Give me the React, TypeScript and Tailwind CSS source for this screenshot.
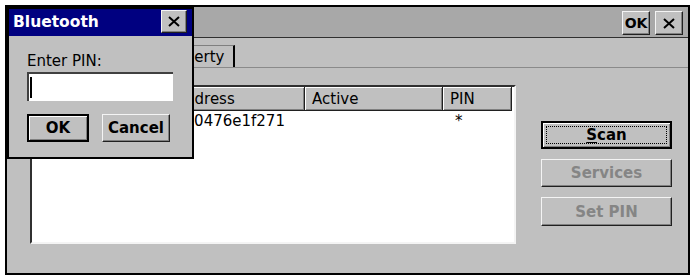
import React from "react";

function XIcon() {
  return (
    <svg width="12" height="11" viewBox="0 0 12 11">
      <path d="M1 1 L11 10 M11 1 L1 10" stroke="#000" strokeWidth="2" fill="none" />
    </svg>
  );
}

const raised =
  "bg-[#c0c0c0] border border-t-[#f4f4f4] border-l-[#f4f4f4] border-b-[#202020] border-r-[#202020] shadow-[inset_-1px_-1px_0_#808080]";

const headerCell =
  "h-[24px] bg-[#c0c0c0] border-r border-b border-[#202020] shadow-[inset_1px_1px_0_#fff,inset_-1px_-1px_0_#808080] flex items-center pl-[7px] shrink-0";

export default function App() {
  return (
    <div className="relative w-[696px] h-[279px] bg-white overflow-hidden font-['DejaVu_Sans',sans-serif] text-[15px] leading-[18px] text-black">
      {/* Main window */}
      <div className="ml-[5px] mt-[5px] w-[685px] h-[270px] border-2 border-black bg-[#c0c0c0] flex flex-col">
        {/* title bar */}
        <div className="h-[31px] shrink-0 bg-[#a8a8a8] border-b border-[#303030] flex items-start justify-end gap-[5px] pt-[4px] pr-[5px]">
          <div className={`${raised} w-[28px] h-[24px] flex items-center justify-center font-bold text-[14px]`}>OK</div>
          <div className={`${raised} w-[28px] h-[24px] flex items-center justify-center`}>
            <XIcon />
          </div>
        </div>
        {/* tabs */}
        <div className="h-[29px] shrink-0 flex items-end pl-[2px]">
          <div className="w-[146px] h-[24px] bg-[#c0c0c0] border-t border-l border-[#808080] border-r-2 border-r-black"></div>
          <div className="w-[80px] h-[22px] bg-[#c0c0c0] border-t border-[#808080] border-r-2 border-r-black flex items-center pl-[6px]">
            Property
          </div>
        </div>
        {/* tab page */}
        <div className="flex-1 border-t border-[#8a8a8a] flex items-start pt-[17px]">
          {/* list view */}
          <div className="ml-[23px] w-[486px] h-[159px] border-2 border-t-[#303030] border-l-[#303030] border-b-[#f4f4f4] border-r-[#f4f4f4] bg-white flex flex-col">
            <div className="flex">
              <div className={`${headerCell} w-[136px]`}></div>
              <div className={`${headerCell} w-[137px]`}>Address</div>
              <div className={`${headerCell} w-[138px]`}>Active</div>
              <div className={`${headerCell} w-[69px] pl-[5px]`}>PIN</div>
            </div>
            <div className="flex h-[19px] items-center">
              <div className="w-[136px] pl-[7px] shrink-0"></div>
              <div className="w-[137px] pl-[7px] shrink-0">000476e1f271</div>
              <div className="w-[138px] pl-[7px] shrink-0"></div>
              <div className="w-[69px] pl-[12px] shrink-0">*</div>
            </div>
          </div>
          {/* buttons */}
          <div className="ml-[25px] mt-[36px] flex flex-col gap-[10px]">
            <div className="w-[131px] h-[28px] border-2 border-black bg-[#c0c0c0] shadow-[inset_1px_1px_0_#fff,inset_-1px_-1px_0_#808080] p-[3px]">
              <div className="w-full h-full border border-dotted border-black flex items-center justify-center font-bold">
                <span className="underline underline-offset-2">S</span>can
              </div>
            </div>
            <div className={`${raised} w-[131px] h-[28px] flex items-center justify-center font-bold text-[#858585]`}>
              Services
            </div>
            <div className={`${raised} w-[131px] h-[29px] flex items-center justify-center font-bold text-[#858585]`}>
              Set PIN
            </div>
          </div>
        </div>
      </div>

      {/* Bluetooth dialog (overlay) */}
      <div className="absolute left-[7px] top-[7px] w-[187px] h-[152px] border-2 border-black bg-[#c0c0c0] flex flex-col">
        <div className="h-[27px] shrink-0 bg-[#000080] flex items-start justify-between pl-[4px] pr-[5px] pt-[1px]">
          <span className="text-white font-bold text-[15.5px] leading-[24px]">Bluetooth</span>
          <div className={`${raised} w-[26px] h-[23px] flex items-center justify-center`}>
            <XIcon />
          </div>
        </div>
        <div className="flex flex-col pl-[18px] pt-[16px]">
          <div>Enter PIN:</div>
          <div className="mt-[2px] w-[146px] h-[29px] bg-white border-t-2 border-l-2 border-[#404040] flex items-center pl-[1px]">
            <div className="w-[2px] h-[21px] bg-black"></div>
          </div>
          <div className="mt-[13px] flex gap-[13px]">
            <div className="w-[62px] h-[28px] border-2 border-black bg-[#c0c0c0] shadow-[inset_1px_1px_0_#fff,inset_-1px_-1px_0_#808080] flex items-center justify-center font-bold">
              OK
            </div>
            <div className={`${raised} w-[68px] h-[28px] flex items-center justify-center font-bold`}>
              Cancel
            </div>
          </div>
        </div>
      </div>
    </div>
  );
}
